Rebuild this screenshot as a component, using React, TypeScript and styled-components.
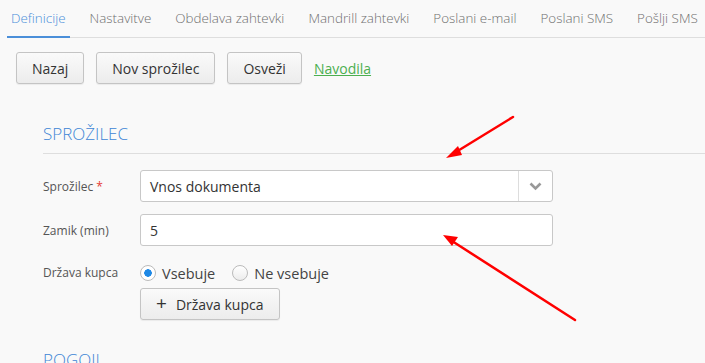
import styled, { createGlobalStyle } from "styled-components";

const GlobalStyle = createGlobalStyle`
  html, body {
    margin: 0;
    background: #f9f9f9;
    font-family: "Open Sans", "Liberation Sans", sans-serif;
    color: #555;
    overflow: hidden;
  }
`;

const Page = styled.div`
  position: relative;
  width: 705px;
  height: 363px;
  overflow: hidden;
`;

const TabBar = styled.div`
  display: flex;
  margin-left: 7px;
  height: 37px;
  border-bottom: 1px solid #dedede;
  white-space: nowrap;
`;

const Tab = styled.div<{ $active?: boolean }>`
  padding: 9px 4px 0;
  margin-right: 16px;
  font-size: 13.4px;
  font-weight: 300;
  color: ${(p) => (p.$active ? "#4b8fd9" : "#6f6f6f")};
  border-bottom: 2px solid ${(p) => (p.$active ? "#4b8fd9" : "transparent")};
  margin-bottom: -1px;
`;

const Toolbar = styled.div`
  display: flex;
  align-items: center;
  gap: 12px;
  padding: 14px 0 0 16px;
`;

const Button = styled.button`
  height: 32px;
  padding: 0 15px;
  font-family: inherit;
  font-size: 14px;
  color: #333;
  background: linear-gradient(#fafafa, #ececec);
  border: 1px solid #c4c4c4;
  border-radius: 3px;
  box-shadow: 0 1px 1px rgba(0, 0, 0, 0.06);
  display: flex;
  align-items: center;
  gap: 9px;
`;

const Link = styled.a`
  font-size: 14px;
  color: #4caf50;
  text-decoration: underline;
`;

const Section = styled.div`
  padding-left: 43px;
`;

const SectionTitle = styled.div<{ $top: number }>`
  margin-top: ${(p) => p.$top}px;
  font-size: 17px;
  font-weight: 300;
  color: #3f86d6;
  padding-bottom: 8px;
  border-bottom: 1px solid #dedede;
`;

const Form = styled.div`
  display: grid;
  grid-template-columns: 97px 413px;
  grid-auto-rows: 32px;
  row-gap: 12px;
  margin-top: 16px;
  align-items: center;
`;

const Label = styled.div<{ $top?: boolean }>`
  font-size: 12px;
  color: #555;
  align-self: ${(p) => (p.$top ? "start" : "center")};
  line-height: ${(p) => (p.$top ? "30px" : "normal")};
`;

const Required = styled.span`
  color: #e53935;
  margin-left: 3px;
`;

const Field = styled.div`
  height: 32px;
  box-sizing: border-box;
  background: #fff;
  border: 1px solid #c8c8c8;
  border-radius: 3px;
  display: flex;
  align-items: center;
  font-size: 14px;
  color: #333;
`;

const FieldText = styled.div`
  flex: 1;
  padding-left: 9px;
`;

const Caret = styled.div`
  width: 33px;
  height: 100%;
  border-left: 1px solid #ddd;
  display: flex;
  align-items: center;
  justify-content: center;
`;

const Column = styled.div`
  align-self: start;
  display: flex;
  flex-direction: column;
  align-items: flex-start;
  gap: 0;
`;

const Radios = styled.div`
  height: 30px;
  display: flex;
  align-items: center;
  gap: 17px;
  font-size: 14.5px;
  color: #444;
`;

const RadioItem = styled.label`
  display: flex;
  align-items: center;
  gap: 6px;
`;

const RadioDot = styled.span<{ $on?: boolean }>`
  width: 16px;
  height: 16px;
  box-sizing: border-box;
  border-radius: 50%;
  border: 1px solid #bbb;
  background: ${(p) =>
    p.$on
      ? "radial-gradient(circle, #1e88e5 0 3.5px, #fff 4px)"
      : "linear-gradient(#fff, #ececec)"};
`;

const Plus = styled.span`
  font-size: 19px;
  line-height: 1;
  margin-top: -2px;
`;

const Overlay = styled.svg`
  position: absolute;
  left: 0;
  top: 0;
  pointer-events: none;
`;

const tabs = [
  "Definicije",
  "Nastavitve",
  "Obdelava zahtevki",
  "Mandrill zahtevki",
  "Poslani e-mail",
  "Poslani SMS",
  "Pošlji SMS",
];

export default function App() {
  return (
    <Page>
      <GlobalStyle />
      <TabBar>
        {tabs.map((t, i) => (
          <Tab key={t} $active={i === 0}>
            {t}
          </Tab>
        ))}
      </TabBar>
      <Toolbar>
        <Button>Nazaj</Button>
        <Button>Nov sprožilec</Button>
        <Button>Osveži</Button>
        <Link>Navodila</Link>
      </Toolbar>
      <Section>
        <SectionTitle $top={38}>SPROŽILEC</SectionTitle>
        <Form>
          <Label>
            Sprožilec<Required>*</Required>
          </Label>
          <Field>
            <FieldText>Vnos dokumenta</FieldText>
            <Caret>
              <svg width="13" height="9" viewBox="0 0 13 9">
                <path d="M1.5 1.5 L6.5 6.5 L11.5 1.5" fill="none" stroke="#999" strokeWidth="2.6" />
              </svg>
            </Caret>
          </Field>
          <Label>Zamik (min)</Label>
          <Field>
            <FieldText>5</FieldText>
          </Field>
          <Label $top>Država kupca</Label>
          <Column>
            <Radios>
              <RadioItem>
                <RadioDot $on />
                Vsebuje
              </RadioItem>
              <RadioItem>
                <RadioDot />
                Ne vsebuje
              </RadioItem>
            </Radios>
            <Button>
              <Plus>+</Plus>Država kupca
            </Button>
          </Column>
        </Form>
        <SectionTitle $top={58}>POGOJI</SectionTitle>
      </Section>
      <Overlay width="705" height="363">
        <line x1="513" y1="117" x2="456" y2="152" stroke="#ff0000" strokeWidth="2.5" strokeLinecap="round" />
        <polygon points="446,158 458,146 462,155" fill="#ff0000" />
        <line x1="575" y1="320" x2="452" y2="241" stroke="#ff0000" strokeWidth="2.5" strokeLinecap="round" />
        <polygon points="443,235 458,237 452,246" fill="#ff0000" />
      </Overlay>
    </Page>
  );
}
